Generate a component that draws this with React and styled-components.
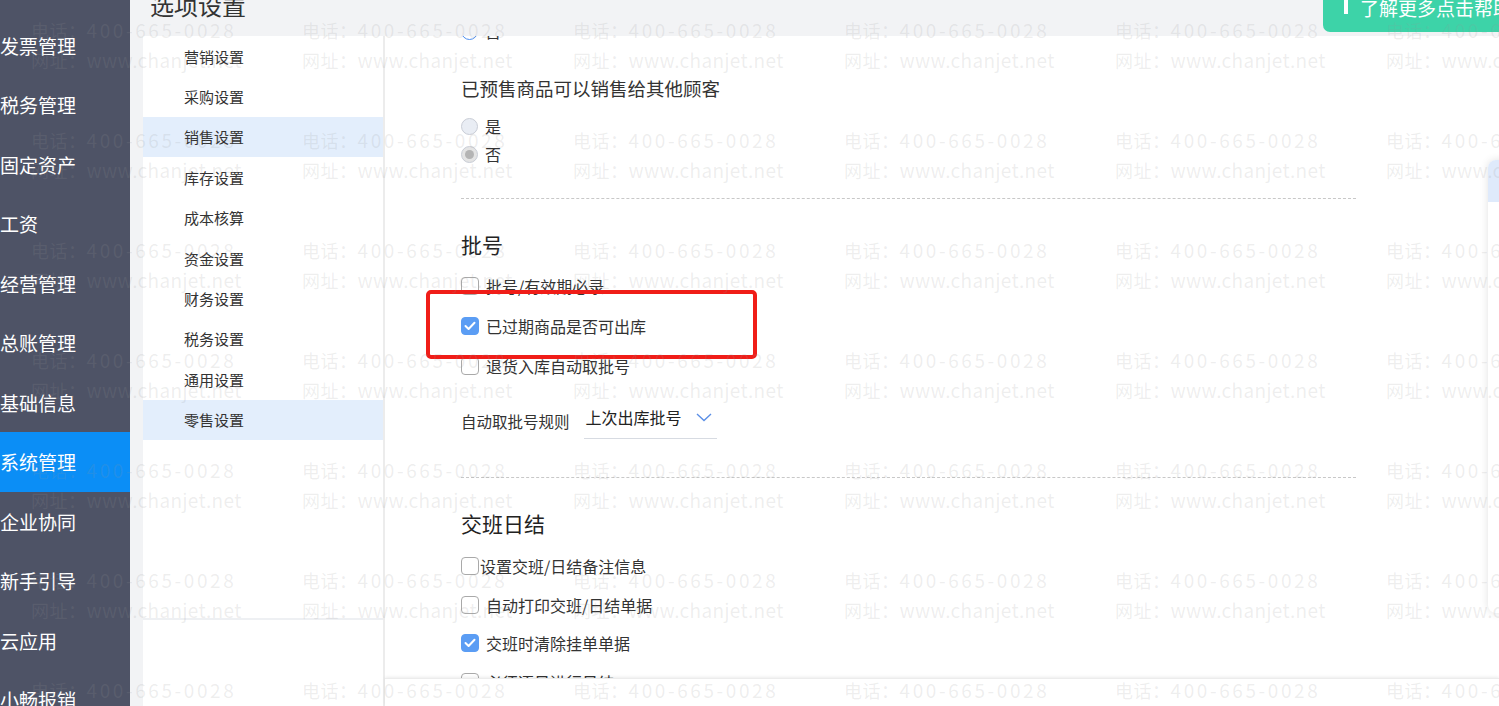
import React from 'react';
import styled, { createGlobalStyle } from 'styled-components';

const GlobalStyle = createGlobalStyle`
  html, body {
    margin: 0;
    padding: 0;
    height: 100%;
    overflow: hidden;
  }
  body {
    font-family: "Noto Sans CJK SC", "Noto Sans", sans-serif;
    color: #333;
  }
`;

const navItems = ['发票管理', '税务管理', '固定资产', '工资', '经营管理', '总账管理', '基础信息', '系统管理', '企业协同', '新手引导', '云应用', '小畅报销'];
const subItems = ['营销设置', '采购设置', '销售设置', '库存设置', '成本核算', '资金设置', '财务设置', '税务设置', '通用设置', '零售设置'];

const Page = styled.div`
  display: flex;
  width: 100vw;
  height: 100vh;
  position: relative;
  overflow: hidden;
`;

const Sidebar = styled.nav`
  width: 130px;
  flex-shrink: 0;
  background: #4e5366;
  padding-top: 15.5px;
  box-sizing: border-box;
`;

const NavItem = styled.div`
  height: 59.5px;
  display: flex;
  align-items: center;
  font-size: 19px;
  color: #fff;
  background: ${p => (p.$active ? '#0b8ef6' : 'transparent')};
  white-space: nowrap;
`;

const Main = styled.div`
  flex: 1;
  display: flex;
  flex-direction: column;
  background: #f2f3f5;
  position: relative;
  min-width: 0;
`;

const Header = styled.header`
  height: 36px;
  flex-shrink: 0;
  display: flex;
  justify-content: space-between;
  align-items: flex-start;
  padding-left: 20px;
`;

const Title = styled.h1`
  margin: -10px 0 0;
  font-size: 24px;
  line-height: 30px;
  font-weight: 400;
  color: #333;
`;

const HelpButton = styled.button`
  width: 210px;
  height: 44px;
  margin-top: -12px;
  margin-right: -34px;
  flex-shrink: 0;
  border: 0;
  border-radius: 0 0 0 7px;
  background: #3dd3a8;
  color: #fff;
  font-family: inherit;
  font-size: 19px;
  display: flex;
  align-items: center;
  gap: 12px;
  padding: 0 0 5px 21px;
  white-space: nowrap;
  &::before {
    content: '';
    width: 4px;
    height: 15px;
    margin-top: -3px;
    background: #fff;
  }
`;

const Body = styled.div`
  flex: 1;
  display: flex;
  padding-left: 13px;
  min-height: 0;
`;

const SubMenu = styled.aside`
  width: 240px;
  flex-shrink: 0;
  background: #fff;
  border-right: 2px solid #ececec;
`;

const SubList = styled.div`
  height: 582px;
  border-bottom: 2px solid #eef0f3;
`;

const SubItem = styled.div`
  height: 40.4px;
  display: flex;
  align-items: center;
  padding-left: 41px;
  font-size: 15px;
  color: #333;
  background: ${p => (p.$active ? '#e3eefc' : 'transparent')};
`;

const ContentPane = styled.section`
  flex: 1;
  display: flex;
  flex-direction: column;
  background: #fff;
  min-width: 0;
`;

const Scroll = styled.div`
  flex: 1;
  overflow: hidden;
  padding-left: 76px;
`;

const Inner = styled.div`
  width: 895px;
  margin-top: -19px;
`;

const Footer = styled.footer`
  height: 27px;
  flex-shrink: 0;
  background: #fff;
  box-shadow: 0 -1px 3px rgba(0, 0, 0, 0.08);
  border-top: 1px solid #ececec;
  position: relative;
  z-index: 2;
`;

const Question = styled.div`
  margin-top: 29px;
  font-size: 18.5px;
  line-height: 28px;
  color: #333;
`;

const RadioGroup = styled.div`
  margin-top: ${p => p.$mt || 0}px;
`;

const RadioRow = styled.label`
  height: 28px;
  display: flex;
  align-items: center;
  gap: 7px;
  font-size: 16px;
  color: #333;
`;

const RadioDot = styled.span`
  width: 17px;
  height: 17px;
  box-sizing: border-box;
  border-radius: 50%;
  border: 1px solid ${p => (p.$blue ? '#4d8ff0' : '#c9cdd6')};
  background: ${p => (p.$checked && !p.$blue ? '#e4e4e4' : p.$blue ? '#fff' : '#e9edf4')};
  display: flex;
  align-items: center;
  justify-content: center;
  &::after {
    content: '';
    width: 9px;
    height: 9px;
    border-radius: 50%;
    background: ${p => (p.$blue ? '#4d8ff0' : '#b4b4b4')};
    display: ${p => (p.$checked ? 'block' : 'none')};
  }
`;

const Divider = styled.hr`
  margin: ${p => p.$mt}px 0 0;
  border: 0;
  border-top: 1px dashed #c8c8c8;
`;

const SectionTitle = styled.h2`
  margin: 30px 0 0;
  font-size: 21px;
  line-height: 30px;
  font-weight: 400;
  color: #222;
`;

const CheckGroup = styled.div`
  position: relative;
  margin-top: ${p => p.$mt}px;
`;

const CheckRow = styled.label`
  height: ${p => p.$h}px;
  display: flex;
  align-items: center;
  gap: ${p => (p.$tight ? 1 : 7)}px;
  font-size: 16px;
  color: #333;
`;

const Box = styled.span`
  width: 18px;
  height: 18px;
  box-sizing: border-box;
  border-radius: 4px;
  border: 1px solid ${p => (p.$checked ? '#5b9df4' : '#a9a9a9')};
  background: ${p => (p.$checked ? '#5b9df4' : '#fff')};
  display: flex;
  align-items: center;
  justify-content: center;
  flex-shrink: 0;
`;

const Highlight = styled.div`
  position: absolute;
  left: -35px;
  top: 24px;
  width: 331px;
  height: 69px;
  box-sizing: border-box;
  border: 4px solid #f01d18;
  border-radius: 5px;
  pointer-events: none;
`;

const RuleRow = styled.div`
  margin-top: 17px;
  height: 36px;
  display: flex;
  align-items: center;
  gap: 14px;
  font-size: 15.5px;
  color: #333;
`;

const Select = styled.div`
  width: 133px;
  height: 36px;
  box-sizing: border-box;
  border-bottom: 1px solid #d7dbe2;
  display: flex;
  align-items: center;
  gap: 14px;
  padding: 0 0 7px 2px;
  font-size: 16px;
  color: #222;
`;

const FloatPanel = styled.div`
  position: absolute;
  left: 1358px;
  top: 160px;
  width: 60px;
  height: 453px;
  background: #fff;
  border-radius: 8px 0 0 8px;
  box-shadow: 0 0 8px rgba(0, 0, 0, 0.12);
  overflow: hidden;
  z-index: 3;
`;

const FloatHead = styled.div`
  height: 42px;
  background: #dfeafb;
`;

const Watermark = styled.div`
  position: absolute;
  inset: 0;
  pointer-events: none;
  z-index: 20;
  padding: 15px 0 0 31px;
  display: grid;
  grid-template-columns: repeat(6, 271px);
  grid-auto-rows: 110px;
`;

const MarkTile = styled.div`
  font-size: 18px;
  line-height: 30px;
  color: rgba(150, 150, 150, 0.16);
  white-space: nowrap;
`;

const MarkLabel = styled.span`
  letter-spacing: 0.5px;
`;

const MarkValue = styled.span`
  font-size: 19px;
  letter-spacing: ${p => p.$ls}px;
`;

const Check = () => (
  <svg width="12" height="10" viewBox="0 0 12 10">
    <polyline points="1.5,5 4.6,8 10.5,1.8" fill="none" stroke="#fff" strokeWidth="2" strokeLinecap="round" strokeLinejoin="round" />
  </svg>
);

const CheckItem = ({ checked, children, h = 40, tight }) => (
  <CheckRow $h={h} $tight={tight}>
    <Box $checked={checked}>{checked && <Check />}</Box>
    {children}
  </CheckRow>
);

const Chevron = () => (
  <svg width="16" height="9" viewBox="0 0 16 9">
    <polyline points="1,1 8,7.5 15,1" fill="none" stroke="#5b8fe6" strokeWidth="1.4" />
  </svg>
);

export default function App() {
  const tiles = Array.from({ length: 42 });
  return (
    <Page>
      <GlobalStyle />
      <Sidebar>
        {navItems.map(t => (
          <NavItem key={t} $active={t === '系统管理'}>{t}</NavItem>
        ))}
      </Sidebar>
      <Main>
        <Header>
          <Title>选项设置</Title>
          <HelpButton>了解更多点击帮助</HelpButton>
        </Header>
        <Body>
          <SubMenu>
            <SubList>
              {subItems.map(t => (
                <SubItem key={t} $active={t === '销售设置' || t === '零售设置'}>{t}</SubItem>
              ))}
            </SubList>
          </SubMenu>
          <ContentPane>
            <Scroll>
              <Inner>
                <RadioGroup>
                  <RadioRow><RadioDot $checked $blue />否</RadioRow>
                </RadioGroup>
                <Question>已预售商品可以销售给其他顾客</Question>
                <RadioGroup $mt={10}>
                  <RadioRow><RadioDot />是</RadioRow>
                  <RadioRow><RadioDot $checked />否</RadioRow>
                </RadioGroup>
                <Divider $mt={30} />
                <SectionTitle>批号</SectionTitle>
                <CheckGroup $mt={7}>
                  <CheckItem>批号/有效期必录</CheckItem>
                  <CheckItem checked>已过期商品是否可出库</CheckItem>
                  <CheckItem>退货入库自动取批号</CheckItem>
                  <Highlight />
                </CheckGroup>
                <RuleRow>
                  自动取批号规则
                  <Select>上次出库批号<Chevron /></Select>
                </RuleRow>
                <Divider $mt={38} />
                <SectionTitle>交班日结</SectionTitle>
                <CheckGroup $mt={9}>
                  <CheckItem h={38.5} tight>设置交班/日结备注信息</CheckItem>
                  <CheckItem h={38.5}>自动打印交班/日结单据</CheckItem>
                  <CheckItem h={38.5} checked>交班时清除挂单单据</CheckItem>
                  <CheckItem h={38.5}>必须逐日进行日结</CheckItem>
                </CheckGroup>
              </Inner>
            </Scroll>
            <Footer />
          </ContentPane>
        </Body>
        <FloatPanel>
          <FloatHead />
        </FloatPanel>
      </Main>
      <Watermark>
        {tiles.map((_, i) => (
          <MarkTile key={i}>
            <div><MarkLabel>电话：</MarkLabel><MarkValue $ls={2.6}>400-665-0028</MarkValue></div>
            <div><MarkLabel>网址：</MarkLabel><MarkValue $ls={0.3}>www.chanjet.net</MarkValue></div>
          </MarkTile>
        ))}
      </Watermark>
    </Page>
  );
}
